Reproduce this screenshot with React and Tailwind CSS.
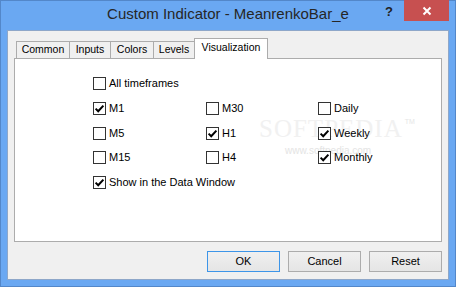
import React from "react";

const TABS = [
  { label: "Common", w: "w-[54px]" },
  { label: "Inputs", w: "w-[42px]" },
  { label: "Colors", w: "w-[44px]" },
  { label: "Levels", w: "w-[42px]" },
];

const Check = ({ checked, label }) => (
  <div className="flex h-[13px] items-center gap-[3px]">
    <span className="flex h-[13px] w-[13px] shrink-0 items-center justify-center border border-[#333333] bg-white">
      {checked && (
        <svg width="11" height="11" viewBox="0 0 11 11">
          <path d="M1.6 5.6 L4.2 8.2 L9.4 2.6" fill="none" stroke="#000" strokeWidth="2" />
        </svg>
      )}
    </span>
    <span className="text-[11px] leading-[13px] text-black">{label}</span>
  </div>
);

const Row = ({ items, mt }) => (
  <div className={`grid grid-cols-[113px_112px_100px] ${mt}`}>
    {items.map((c, i) => (c ? <Check key={i} checked={c[1]} label={c[0]} /> : <div key={i} />))}
  </div>
);

const Button = ({ children, focused }) => (
  <button
    className={`flex h-[21px] w-[73px] items-center justify-center border bg-gradient-to-b from-[#f0f0f0] to-[#e5e5e5] text-[11px] text-black ${focused ? "border-[#3d95e8]" : "border-[#acacac]"}`}
  >
    {children}
  </button>
);

export default function App() {
  return (
    <div className="flex h-[287px] w-[456px] flex-col bg-[#6aa8f2] px-[7px] shadow-[inset_0_0_0_1px_#5387c9] font-['Liberation_Sans',Arial,sans-serif]">
      {/* title bar */}
      <div className="-mx-[7px] grid h-[30px] shrink-0">
        <div className="[grid-area:1/1] flex items-center justify-center pb-px text-[15px] text-[#262626]">
          Custom Indicator - MeanrenkoBar_e
        </div>
        <div className="[grid-area:1/1] flex items-start justify-end pr-[7px]">
          <span className="mt-[5px] mr-[11px] text-[13px] font-bold leading-[14px] text-[#222]">?</span>
          <span className="flex h-[21px] w-[45px] items-center justify-center bg-[#c75050]">
            <svg width="10" height="10" viewBox="0 0 10 10">
              <path d="M1.5 1.5 L8.5 8.5 M8.5 1.5 L1.5 8.5" stroke="#fff" strokeWidth="2" />
            </svg>
          </span>
        </div>
      </div>

      {/* client */}
      <div className="h-[250px] shrink-0 border border-[#8ea7c9] bg-[#f0f0f0] pt-[7px]">
        <div className="relative z-10 -mb-px ml-[8px] flex items-end">
          {TABS.map((t, i) => (
            <div
              key={t.label}
              className={`mb-px flex h-[17px] items-center justify-center border border-b-0 border-[#acacac] bg-[#f0f0f0] text-[10.5px] text-black ${t.w} ${i > 0 ? "-ml-px" : ""}`}
            >
              {t.label}
            </div>
          ))}
          <div className="-ml-px flex h-[21px] w-[74px] items-center justify-center border border-b-0 border-[#acacac] bg-white pb-[2px] text-[10.5px] text-black">
            Visualization
          </div>
        </div>

        <div className="relative ml-[6px] h-[184px] w-[428px] border border-[#acacac] bg-white pl-[78px] pt-[18px]">
          <div className="pointer-events-none absolute left-[244px] top-[59px] select-none">
            <div className="flex items-start">
              <span className="font-['Liberation_Serif',serif] text-[25px] leading-[22px] tracking-[1px] text-[#f1f1f1]">SOFTPEDIA</span>
              <span className="ml-[2px] text-[7px] leading-[8px] text-[#e6e6e6]">TM</span>
            </div>
            <div className="ml-[26px] mt-[6px] text-[10px] leading-[10px] text-[#e4e4e4]">www.softpedia.com</div>
          </div>
          <div className="relative">
            <Row items={[["All timeframes", false]]} mt="" />
            <Row items={[["M1", true], ["M30", false], ["Daily", false]]} mt="mt-[12px]" />
            <Row items={[["M5", false], ["H1", true], ["Weekly", true]]} mt="mt-[12px]" />
            <Row items={[["M15", false], ["H4", false], ["Monthly", true]]} mt="mt-[11px]" />
            <div className="mt-[12px]">
              <Check checked label="Show in the Data Window" />
            </div>
          </div>
        </div>

        <div className="ml-[6px] mt-[9px] flex w-[428px] justify-end gap-2">
          <Button focused>OK</Button>
          <Button>Cancel</Button>
          <Button>Reset</Button>
        </div>
      </div>
    </div>
  );
}
